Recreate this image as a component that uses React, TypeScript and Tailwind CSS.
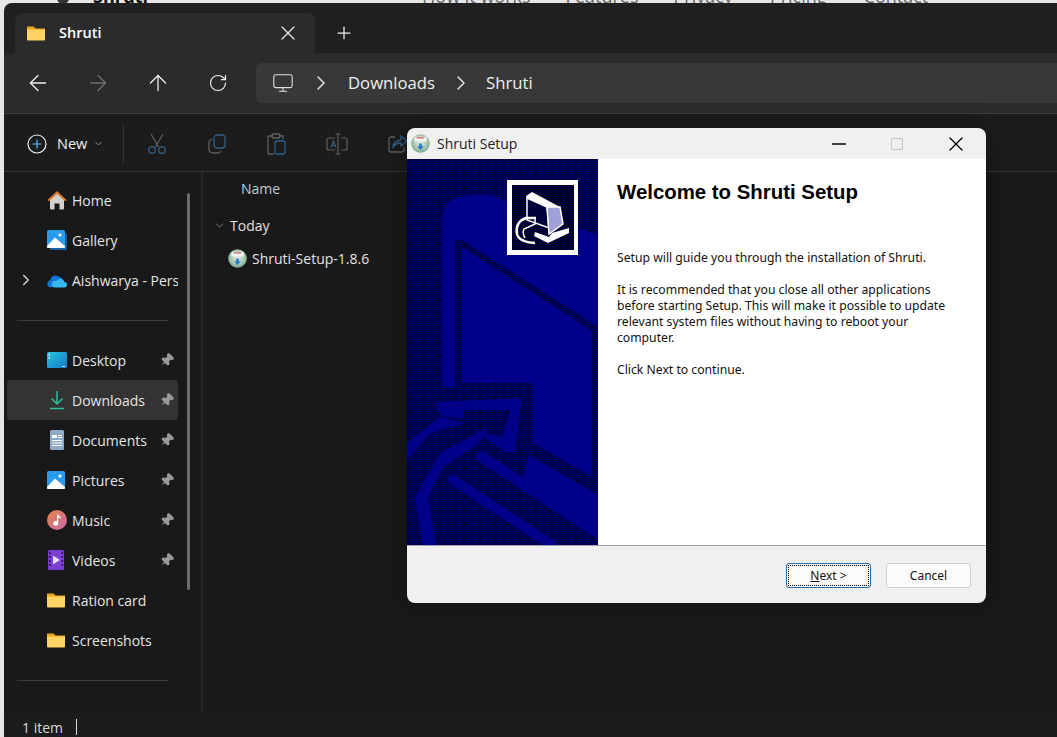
import type { ReactNode } from "react";
import {
  ArrowLeft,
  ArrowRight,
  ArrowUp,
  ChevronDown,
  ChevronRight,
  Minus,
  Monitor,
  Pin,
  Plus,
  RotateCw,
  X,
} from "lucide-react";

const FolderIcon = ({ w = 18 }: { w?: number }) => (
  <svg width={w} height={w} viewBox="0 0 18 18">
    <path d="M0 2.500h6.500l2 2H18v2H0z" fill="#eda81f" />
    <path d="M0 5.500h18v10a1 1 0 0 1-1 1H1a1 1 0 0 1-1-1z" fill="#fdd365" />
  </svg>
);

const HomeIcon = () => (
  <svg width="20" height="20" viewBox="0 0 20 20">
    <path d="M3 9.500 10 3.500l7 6v9a1 1 0 0 1-1 1h-3.500v-6h-5v6H4a1 1 0 0 1-1-1z" fill="#d4d0cc" />
    <path d="M0.500 10 10 1l9.500 9-1.200 1.200L10 3.800 1.700 11.200z" fill="#e0792a" />
  </svg>
);

const GalleryIcon = () => (
  <svg width="20" height="20" viewBox="0 0 20 20">
    <rect x="3" y="3" width="17" height="17" rx="1.500" fill="#1c5fa8" />
    <rect x="0" y="0" width="18" height="18" rx="1.500" fill="#2a9be8" />
    <path d="M0 16 8 7.500l10 8.500v1a1 1 0 0 1-1 1H1a1 1 0 0 1-1-1z" fill="#fff" />
    <circle cx="13" cy="5" r="1.600" fill="#fff" />
  </svg>
);

const CloudIcon = () => (
  <svg width="20" height="15" viewBox="0 0 20 15">
    <path d="M4 14.500a3.700 3.700 0 0 1-.8-7.300A5.500 5.500 0 0 1 12.500 4 4.200 4.200 0 0 1 16 7.500z" fill="#0f74d6" />
    <path d="M7 14.500h10a2.800 2.800 0 0 0 .5-5.600A4.300 4.300 0 0 0 9.500 8 3.400 3.400 0 0 0 7 14.500z" fill="#38b6f2" />
  </svg>
);

const DesktopIcon = () => (
  <svg width="20" height="16" viewBox="0 0 20 16">
    <defs>
      <linearGradient id="desk" x1="0" y1="0" x2="1" y2="1">
        <stop offset="0" stopColor="#27c5dd" />
        <stop offset="1" stopColor="#1379c9" />
      </linearGradient>
    </defs>
    <rect width="20" height="16" rx="1.500" fill="url(#desk)" />
    <rect x="1.500" y="2" width="1.500" height="1.500" fill="#bdeefa" />
    <rect x="1.500" y="5" width="1.500" height="1.500" fill="#bdeefa" />
    <rect x="15" y="14" width="3" height="1" fill="#bdeefa" />
  </svg>
);

const DownloadIcon = () => (
  <svg width="20" height="20" viewBox="0 0 20 20" fill="none" stroke="#2fbf9b" strokeWidth="1.500">
    <path d="M10 1v13M4.500 8.500 10 14l5.500-5.500M3 18.500h14" />
  </svg>
);

const DocumentIcon = () => (
  <svg width="20" height="20" viewBox="0 0 20 20">
    <rect x="3" y="0" width="14" height="20" rx="1.500" fill="#8fa9c9" />
    <path d="M5 5h5v3H5zM5 10h10v1H5zM5 12.500h10v1H5zM5 15h10v1H5zM11 5h4v1h-4zM11 7h4v1h-4z" fill="#fff" />
  </svg>
);

const PicturesIcon = () => (
  <svg width="18" height="18" viewBox="0 0 18 18">
    <rect width="18" height="18" rx="1.500" fill="#2a9be8" />
    <path d="M0 16 8 7.500l10 8.500v1a1 1 0 0 1-1 1H1a1 1 0 0 1-1-1z" fill="#fff" />
    <circle cx="13" cy="5" r="1.500" fill="#fff" />
  </svg>
);

const MusicIcon = () => (
  <svg width="20" height="20" viewBox="0 0 20 20">
    <defs>
      <linearGradient id="mus" x1="0" y1="0" x2="1" y2="1">
        <stop offset="0" stopColor="#e8834a" />
        <stop offset="1" stopColor="#c568a8" />
      </linearGradient>
    </defs>
    <circle cx="10" cy="10" r="10" fill="url(#mus)" />
    <path d="M10 4.500h1.200c.2 1.500 1.300 2 2.500 2.300v1.500c-1-.1-1.900-.5-2.500-1v6a2.400 2.400 0 1 1-1.200-2z" fill="#fff" />
  </svg>
);

const VideoIcon = () => (
  <svg width="18" height="20" viewBox="0 0 18 20">
    <rect width="16" height="20" x="1" rx="1.500" fill="#7b3fd6" />
    <path d="M2 2h1.500v2H2zM2 6h1.500v2H2zM2 10h1.500v2H2zM2 14h1.500v2H2zM14.500 2H16v2h-1.500zM14.500 6H16v2h-1.500zM14.500 10H16v2h-1.500zM14.500 14H16v2h-1.500z" fill="#2b1450" />
    <path d="M6 5.500 13 10l-7 4.500z" fill="#e6dcff" />
  </svg>
);

const ShrutiIcon = ({ size }: { size: number }) => (
  <svg width={size} height={size} viewBox="0 0 20 20">
    <defs>
      <radialGradient id="disc" cx="0.500" cy="0.450" r="0.600">
        <stop offset="0" stopColor="#e8eee8" />
        <stop offset="0.650" stopColor="#a3c4a8" />
        <stop offset="1" stopColor="#5f9a86" />
      </radialGradient>
    </defs>
    <circle cx="10" cy="10" r="9.800" fill="url(#disc)" />
    <rect x="3.500" y="3" width="13" height="5" rx="1" fill="#f2f2f2" />
    <rect x="6" y="3.500" width="8" height="1.200" fill="#c8545a" />
    <path d="M8.500 10h3v3h2L10 17l-3.500-4h2z" fill="#2f7fc8" />
  </svg>
);

const pinned = (
  <Pin size={14} strokeWidth={2} className="rotate-45 fill-[#9a9a9a] text-[#9a9a9a]" />
);

const items: { label: string; icon: ReactNode; chevron?: boolean }[] = [
  { label: "Home", icon: <HomeIcon /> },
  { label: "Gallery", icon: <GalleryIcon /> },
  { label: "Aishwarya - Personal", icon: <CloudIcon />, chevron: true },
];

const quick: { label: string; icon: ReactNode; pin?: boolean; active?: boolean }[] = [
  { label: "Desktop", icon: <DesktopIcon />, pin: true },
  { label: "Downloads", icon: <DownloadIcon />, pin: true, active: true },
  { label: "Documents", icon: <DocumentIcon />, pin: true },
  { label: "Pictures", icon: <PicturesIcon />, pin: true },
  { label: "Music", icon: <MusicIcon />, pin: true },
  { label: "Videos", icon: <VideoIcon />, pin: true },
  { label: "Ration card", icon: <FolderIcon /> },
  { label: "Screenshots", icon: <FolderIcon /> },
];

function NavRow({ label, icon, pin, active, chevron }: { label: string; icon: ReactNode; pin?: boolean; active?: boolean; chevron?: boolean }) {
  return (
    <div className={`relative flex h-10 w-[171px] items-center overflow-hidden rounded pl-10 ${active ? "bg-[#333333]" : ""}`}>
      {chevron && <ChevronRight size={18} strokeWidth={2} className="absolute left-[10px] top-[11px] text-[#d0d0d0]" />}
      <span className="flex w-[25px] shrink-0 items-center">{icon}</span>
      <span className="whitespace-nowrap text-[14px] text-[#e4e4e4]">{label}</span>
      {pin && <span className="absolute left-[153px] top-[13px]">{pinned}</span>}
    </div>
  );
}

// dark dithered area with the big bright installer artwork on top
function SetupArtwork() {
  const blue = "#000088";
  return (
    <svg width="191" height="386" viewBox="407 159 191 386" className="block">
      <defs>
        <pattern id="dither" width="2" height="2" patternUnits="userSpaceOnUse">
          <rect width="2" height="2" fill="#000072" />
          <rect width="1" height="1" fill="#000038" />
          <rect x="1" y="1" width="1" height="1" fill="#000038" />
        </pattern>
        <pattern id="specks" width="14" height="14" patternUnits="userSpaceOnUse">
          <rect x="3" y="5" width="2" height="2" fill="#000018" />
        </pattern>
        <pattern id="logodither" width="2" height="2" patternUnits="userSpaceOnUse">
          <rect width="2" height="2" fill="#000050" />
          <rect width="1" height="1" fill="#000010" />
          <rect x="1" y="1" width="1" height="1" fill="#000010" />
        </pattern>
      </defs>
      <rect x="407" y="159" width="191" height="386" fill="url(#dither)" />
      <rect x="407" y="159" width="191" height="386" fill="url(#specks)" />
      {/* monitor body */}
      <path d="M442 387V222q0-27 30-27h18l108 40v92l-6-4-130-83-7 0v147z" fill={blue} />
      <path d="M462 247 592 331v146l-59-34 0-60h-71z" fill={blue} />
      {/* arrow */}
      <path d="M437 402 522 398 515 452 507 453 488 440 473 430 503 437 510 410 465 410 463 418 443 417 437 410z" fill={blue} />
      <path d="M440 417 407 443 407 460 430 433 465 423z" fill={blue} />
      <path d="M487 428 440 453 415 497 423 545H436L428 497 443 467 480 443z" fill={blue} />
      {/* keyboard streaks */}
      <path d="M482 457 598 533" stroke={blue} strokeWidth="11" strokeLinecap="round" />
      <path d="M453 480 552 545" stroke={blue} strokeWidth="10" strokeLinecap="round" />
      <path d="M523 477 529 455 598 495 598 530 575 518z" fill={blue} />
    </svg>
  );
}

function SetupLogo() {
  return (
    <svg width="71" height="75" viewBox="0 0 71 75" className="block">
      <rect width="71" height="75" fill="#fff" />
      <rect x="5" y="5" width="62" height="65" fill="url(#logodither)" />
      <path d="M19 16 25 12 53 27 40 27 20 18z" fill="#fff" />
      <path d="M20 18 40 27 42 48 20 40z" fill="#00003a" stroke="#fff" strokeWidth="1.500" />
      <path d="M53 27 56 44 42 54 40 27z" fill="#a0a0d8" stroke="#fff" strokeWidth="1.500" />
      <path d="M45 53 62 48 62 53 41 63 27 56 28 52 42 57z" fill="#fff" />
      <path d="M29 38H19Q8 42 10 54 12 62 28 63" fill="none" stroke="#fff" strokeWidth="2.500" />
      <path d="M28 37V44L17 49Q15 53 18 58" fill="none" stroke="#fff" strokeWidth="1.500" />
    </svg>
  );
}

function SetupDialog() {
  return (
    <div className="absolute left-[407px] top-[128px] flex h-[475px] w-[579px] flex-col overflow-hidden rounded-lg bg-[#f0f0f0] text-black shadow-[0_0_24px_rgba(0,0,0,0.35)]">
      <div className="flex h-[31px] shrink-0 items-center pl-1">
        <ShrutiIcon size={19} />
        <span className="ml-[7px] font-['Open_Sans',sans-serif] text-[14px] text-[#222]">Shruti Setup</span>
        <div className="ml-auto flex items-center">
          <Minus size={22} strokeWidth={1.4} className="mr-[41px] text-black" />
          <span className="mr-[41px] h-[12px] w-[12px] rounded-[2px] border border-[#c4c4c4]" />
          <X size={24} strokeWidth={1.3} className="mr-[18px] text-black" />
        </div>
      </div>
      <div className="flex h-[386px] shrink-0">
        <div className="relative w-[191px] shrink-0">
          <SetupArtwork />
          <div className="absolute left-[100px] top-[21px]">
            <SetupLogo />
          </div>
        </div>
        <div className="flex-1 bg-white pl-[19px]">
          <h1 className="mt-[20px] font-['Liberation_Sans',Arial,sans-serif] text-[20.4px] font-bold leading-[26px]">
            Welcome to Shruti Setup
          </h1>
          <div className="mt-[45px] w-[345px] font-['Noto_Sans',sans-serif] text-[12.2px] leading-4 text-[#111]">
            <p>Setup will guide you through the installation of Shruti.</p>
            <p className="mt-4">
              It is recommended that you close all other applications
              <br />
              before starting Setup. This will make it possible to update
              <br />
              relevant system files without having to reboot your
              <br />
              computer.
            </p>
            <p className="mt-4">Click Next to continue.</p>
          </div>
        </div>
      </div>
      <div className="flex flex-1 items-start justify-end border-t border-[#a0a0a0] pr-[15px] pt-[17px] font-['Noto_Sans',sans-serif] text-[12px] text-[#111]">
        <button className="mr-[15px] flex h-[25px] w-[85px] items-center justify-center rounded-[3px] border border-[#1f6fb0] bg-[#fbfbfb] p-[1px]">
          <span className="flex h-full w-full items-center justify-center border border-dotted border-black">
            <span>
              <span className="underline">N</span>ext &gt;
            </span>
          </span>
        </button>
        <button className="flex h-[25px] w-[85px] items-center justify-center rounded-[3px] border border-[#d0d0d0] bg-[#fbfbfb]">
          Cancel
        </button>
      </div>
    </div>
  );
}

export default function App() {
  return (
    <div className="relative h-[737px] w-[1057px] overflow-hidden bg-[#e6e6e6] font-['Open_Sans',sans-serif]">
      {/* page behind the window, only its last pixels show */}
      <div className="h-[3px] overflow-hidden">
        <div className="-mt-[16px] flex h-[24px] items-center text-[18px] text-[#666]">
          <span className="ml-[57px] h-4 w-3 rounded-full bg-[#333]" />
          <span className="ml-6 font-bold text-[#111]">Shruti</span>
          <span className="ml-[274px]">How it works</span>
          <span className="ml-[35px]">Features</span>
          <span className="ml-[35px]">Privacy</span>
          <span className="ml-[37px]">Pricing</span>
          <span className="ml-[37px]">Contact</span>
        </div>
      </div>

      {/* explorer window */}
      <div className="ml-1 flex h-[734px] flex-col overflow-hidden rounded-tl-lg bg-[#202020] text-white">
        {/* tabs */}
        <div className="flex h-[50px] shrink-0 items-end pl-[11px]">
          <div className="flex h-10 w-[300px] items-center rounded-t-lg bg-[#2b2b2b] pl-3 pr-[15px]">
            <FolderIcon />
            <span className="ml-[14px] text-[14.5px] font-semibold">Shruti</span>
            <X size={24} strokeWidth={1.2} className="ml-auto text-[#eee]" />
          </div>
          <Plus size={20} strokeWidth={1.5} className="mb-[10px] ml-[19px] text-[#eee]" />
        </div>

        {/* address row */}
        <div className="flex h-[61px] shrink-0 items-center border-b border-[#404040] bg-[#2b2b2b] pb-px">
          <div className="flex w-[252px] shrink-0 items-center">
            <ArrowLeft size={26} strokeWidth={1.2} className="ml-[21px] text-[#eee]" />
            <ArrowRight size={26} strokeWidth={1.2} className="ml-[34px] text-[#6f6f6f]" />
            <ArrowUp size={26} strokeWidth={1.2} className="ml-[34px] text-[#eee]" />
            <RotateCw size={20} strokeWidth={1.4} className="ml-[37px] text-[#eee]" />
          </div>
          <div className="flex h-10 flex-1 items-center rounded-l-md bg-[#383838] pl-4">
            <Monitor size={22} strokeWidth={1.2} className="text-[#e0e0e0]" />
            <ChevronRight size={24} strokeWidth={1.5} className="ml-[15px] text-[#e0e0e0]" />
            <span className="ml-[15px] text-[16.7px] text-[#f0f0f0]">Downloads</span>
            <ChevronRight size={24} strokeWidth={1.5} className="ml-[14px] text-[#e0e0e0]" />
            <span className="ml-[13px] text-[16.7px] text-[#f0f0f0]">Shruti</span>
          </div>
        </div>

        {/* command bar */}
        <div className="flex h-[58px] shrink-0 items-center border-b border-[#333333] bg-[#1c1c1c] pt-[2px]">
          <svg width="20" height="20" viewBox="0 0 20 20" fill="none" className="ml-[23px]">
            <circle cx="10" cy="10" r="9" stroke="#eee" strokeWidth="1.200" />
            <path d="M10 5.500v9M5.500 10h9" stroke="#4cc2ff" strokeWidth="1.200" />
          </svg>
          <span className="ml-[10px] text-[14.5px] text-[#f0f0f0]">New</span>
          <ChevronDown size={11} strokeWidth={1.6} className="ml-[6px] text-[#bbb]" />
          <span className="ml-[19px] h-10 w-px bg-[#333333]" />
          <svg width="20" height="22" viewBox="0 0 20 22" fill="none" className="ml-[23px]">
            <path d="M4 1 11.500 14M16 1 8.500 14" stroke="#5f5f5f" strokeWidth="1.200" />
            <circle cx="5" cy="17" r="3.300" stroke="#2f5f86" strokeWidth="1.300" />
            <circle cx="15" cy="17" r="3.300" stroke="#2f5f86" strokeWidth="1.300" />
          </svg>
          <svg width="20" height="20" viewBox="0 0 20 20" fill="none" className="ml-[40px]">
            <rect x="7" y="1" width="11" height="13" rx="3" stroke="#2f5f86" strokeWidth="1.300" />
            <path d="M5 5Q2 6 2 9v6q0 4 4 4h4q3 0 4-2" stroke="#5f5f5f" strokeWidth="1.300" />
          </svg>
          <svg width="20" height="22" viewBox="0 0 20 22" fill="none" className="ml-[39px]">
            <path d="M7 3H3a1 1 0 0 0-1 1v16a1 1 0 0 0 1 1h5M13 3h4v3" stroke="#5f5f5f" strokeWidth="1.300" />
            <rect x="6" y="1" width="8" height="4" rx="1.500" stroke="#5f5f5f" strokeWidth="1.300" />
            <rect x="9" y="8" width="10" height="13" rx="2" stroke="#2f5f86" strokeWidth="1.300" />
          </svg>
          <svg width="22" height="22" viewBox="0 0 22 22" fill="none" className="ml-[40px]">
            <path d="M9 5H3a2 2 0 0 0-2 2v8a2 2 0 0 0 2 2h6M15 5h4a2 2 0 0 1 2 2v8a2 2 0 0 1-2 2h-4M12 1v20M9.500 1h5M9.500 21h5" stroke="#5f5f5f" strokeWidth="1.200" />
            <path d="M5 14.500 7.500 8 10 14.500M6 12.500h3" stroke="#2f5f86" strokeWidth="1.200" />
          </svg>
          <svg width="22" height="22" viewBox="0 0 22 22" fill="none" className="ml-[39px]">
            <path d="M8 4H4a2 2 0 0 0-2 2v11a2 2 0 0 0 2 2h11a2 2 0 0 0 2-2v-3" stroke="#5f5f5f" strokeWidth="1.300" />
            <path d="M14 3l6 5-6 5v-3q-6 0-8 5 0-7 8-8z" stroke="#2f5f86" strokeWidth="1.300" />
          </svg>
        </div>

        {/* sidebar and file list */}
        <div className="flex min-h-0 flex-1 bg-[#191919]">
          <aside className="relative w-[199px] shrink-0 border-r-2 border-[#262626] pl-[3px] pt-2">
            {items.map((it) => (
              <NavRow key={it.label} {...it} />
            ))}
            <div className="mb-[19px] ml-[10px] mt-5 h-px w-[151px] bg-[#3a3a3a]" />
            {quick.map((it) => (
              <NavRow key={it.label} {...it} />
            ))}
            <div className="ml-[10px] mt-5 h-px w-[151px] bg-[#3a3a3a]" />
            <span className="absolute left-[183px] top-[21px] h-[397px] w-[3px] rounded-full bg-[#6b6b6b]" />
          </aside>
          <main className="flex-1 pt-[6px] text-[14px]">
            <div className="ml-[38px] text-[#c8c8c8]">Name</div>
            <div className="ml-[10px] mt-[16px] flex h-5 items-center">
              <ChevronDown size={13} strokeWidth={1.3} className="text-[#9a9a9a]" />
              <span className="ml-[4px] text-[#e0e0e0]">Today</span>
            </div>
            <div className="ml-[25px] mt-[13px] flex h-5 items-center">
              <ShrutiIcon size={19} />
              <span className="ml-[5px] text-[#e4e4e4]">Shruti-Setup-1.8.6</span>
            </div>
          </main>
        </div>

        {/* status bar */}
        <div className="flex h-[25px] shrink-0 items-center bg-[#1c1c1c] pl-[18px] pt-[5px] text-[14px] text-[#d8d8d8]">
          <span>1 item</span>
          <span className="ml-[13px] h-4 w-px bg-[#d8d8d8]" />
        </div>
      </div>

      <SetupDialog />
    </div>
  );
}
